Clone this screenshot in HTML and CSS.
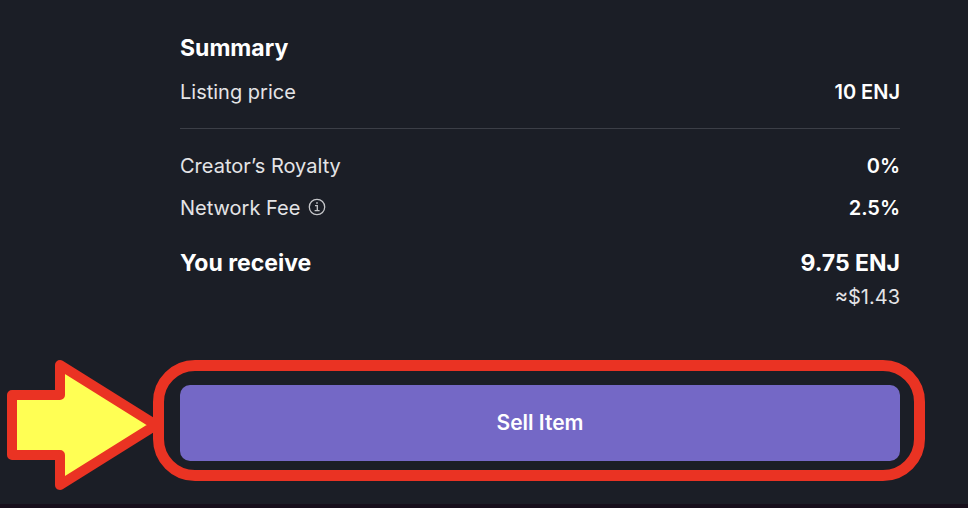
FILE: index.html
```
<!DOCTYPE html>
<html lang="en">
<head>
    <meta charset="UTF-8">
    <meta name="viewport" content="width=device-width, initial-scale=1.0">
    <title>Sell Item</title>
    <link rel="stylesheet" href="styles.css">
</head>
<body>
    <main class="summary">
        <h2 class="summary-title">Summary</h2>
        <dl class="rows">
            <div class="row">
                <dt>Listing price</dt>
                <dd>10 ENJ</dd>
            </div>
        </dl>
        <hr class="divider">
        <dl class="rows">
            <div class="row">
                <dt>Creator’s Royalty</dt>
                <dd>0%</dd>
            </div>
            <div class="row">
                <dt>
                    Network Fee
                    <svg class="info-icon" viewBox="0 0 18 18" aria-hidden="true">
                        <circle cx="9" cy="9" r="7.7"/>
                        <path d="M7 7.7h2.3v4.6M6.6 12.6h5"/>
                        <path d="M8.2 5h1.6"/>
                    </svg>
                </dt>
                <dd>2.5%</dd>
            </div>
        </dl>
        <dl class="total">
            <dt>You receive</dt>
            <dd>9.75 ENJ</dd>
            <dd class="fiat">≈$1.43</dd>
        </dl>
        <div class="action">
            <button class="sell-button" type="button">Sell Item</button>
            <svg class="arrow" viewBox="0 0 156 132" aria-hidden="true">
                <path d="M6 36h48V6l96 60-96 60V96H6z"/>
            </svg>
            <span class="highlight"></span>
        </div>
    </main>
</body>
</html>
```
FILE: styles.css
```
* {
    box-sizing: border-box;
}

body {
    margin: 0;
    min-height: 100vh;
    background-color: #1b1e26;
    border-bottom: 4px solid #170f1b;
    color: #fff;
    font-family: Inter, "Liberation Sans", sans-serif;
    font-size: 20px;
    line-height: 30px;
}

.summary {
    padding: 33px 68px 20px 180px;
}

.summary-title {
    margin: 0 0 14px;
    font-size: 23px;
    font-weight: 700;
    line-height: 30px;
}

.rows,
.total {
    display: grid;
    margin: 0;
}

.rows {
    gap: 12px;
}

.row {
    display: flex;
    justify-content: space-between;
}

dt {
    color: #e4e4e6;
}

dd {
    margin: 0;
    font-weight: 600;
}

.divider {
    height: 1px;
    margin: 21px 0 22px;
    border: 0;
    background-color: #3c3f47;
}

.info-icon {
    width: 18px;
    height: 18px;
    margin-left: 2px;
    vertical-align: -1px;
    fill: none;
    stroke: #c4c5c8;
    stroke-width: 1.3;
}

/* Final amount with its dollar value underneath */
.total {
    grid-template-columns: 1fr auto;
    row-gap: 4px;
    margin-top: 25px;
    font-size: 23px;
}

.total dt {
    color: #fff;
    font-weight: 700;
}

.total dd {
    font-weight: 700;
    text-align: right;
}

.total .fiat {
    grid-column: 2;
    color: #e4e4e6;
    font-size: 20px;
    font-weight: 400;
}

.action {
    position: relative;
    margin-top: 73px;
}

.sell-button {
    display: block;
    width: 100%;
    height: 76px;
    border: 0;
    border-radius: 10px;
    background-color: #7468c6;
    color: #fff;
    font: inherit;
    font-size: 21px;
    font-weight: 600;
    cursor: pointer;
}

/* Red ring around the button */
.highlight {
    position: absolute;
    inset: -25px -25px -20px -27px;
    border: 11px solid #ea3323;
    border-radius: 42px;
    pointer-events: none;
}

/* Arrow pointing at the button */
.arrow {
    position: absolute;
    top: -26px;
    right: calc(100% + 18px);
    width: 156px;
    height: 132px;
    fill: #ffff54;
    stroke: #ea3323;
    stroke-width: 10;
    stroke-linejoin: round;
}
```
